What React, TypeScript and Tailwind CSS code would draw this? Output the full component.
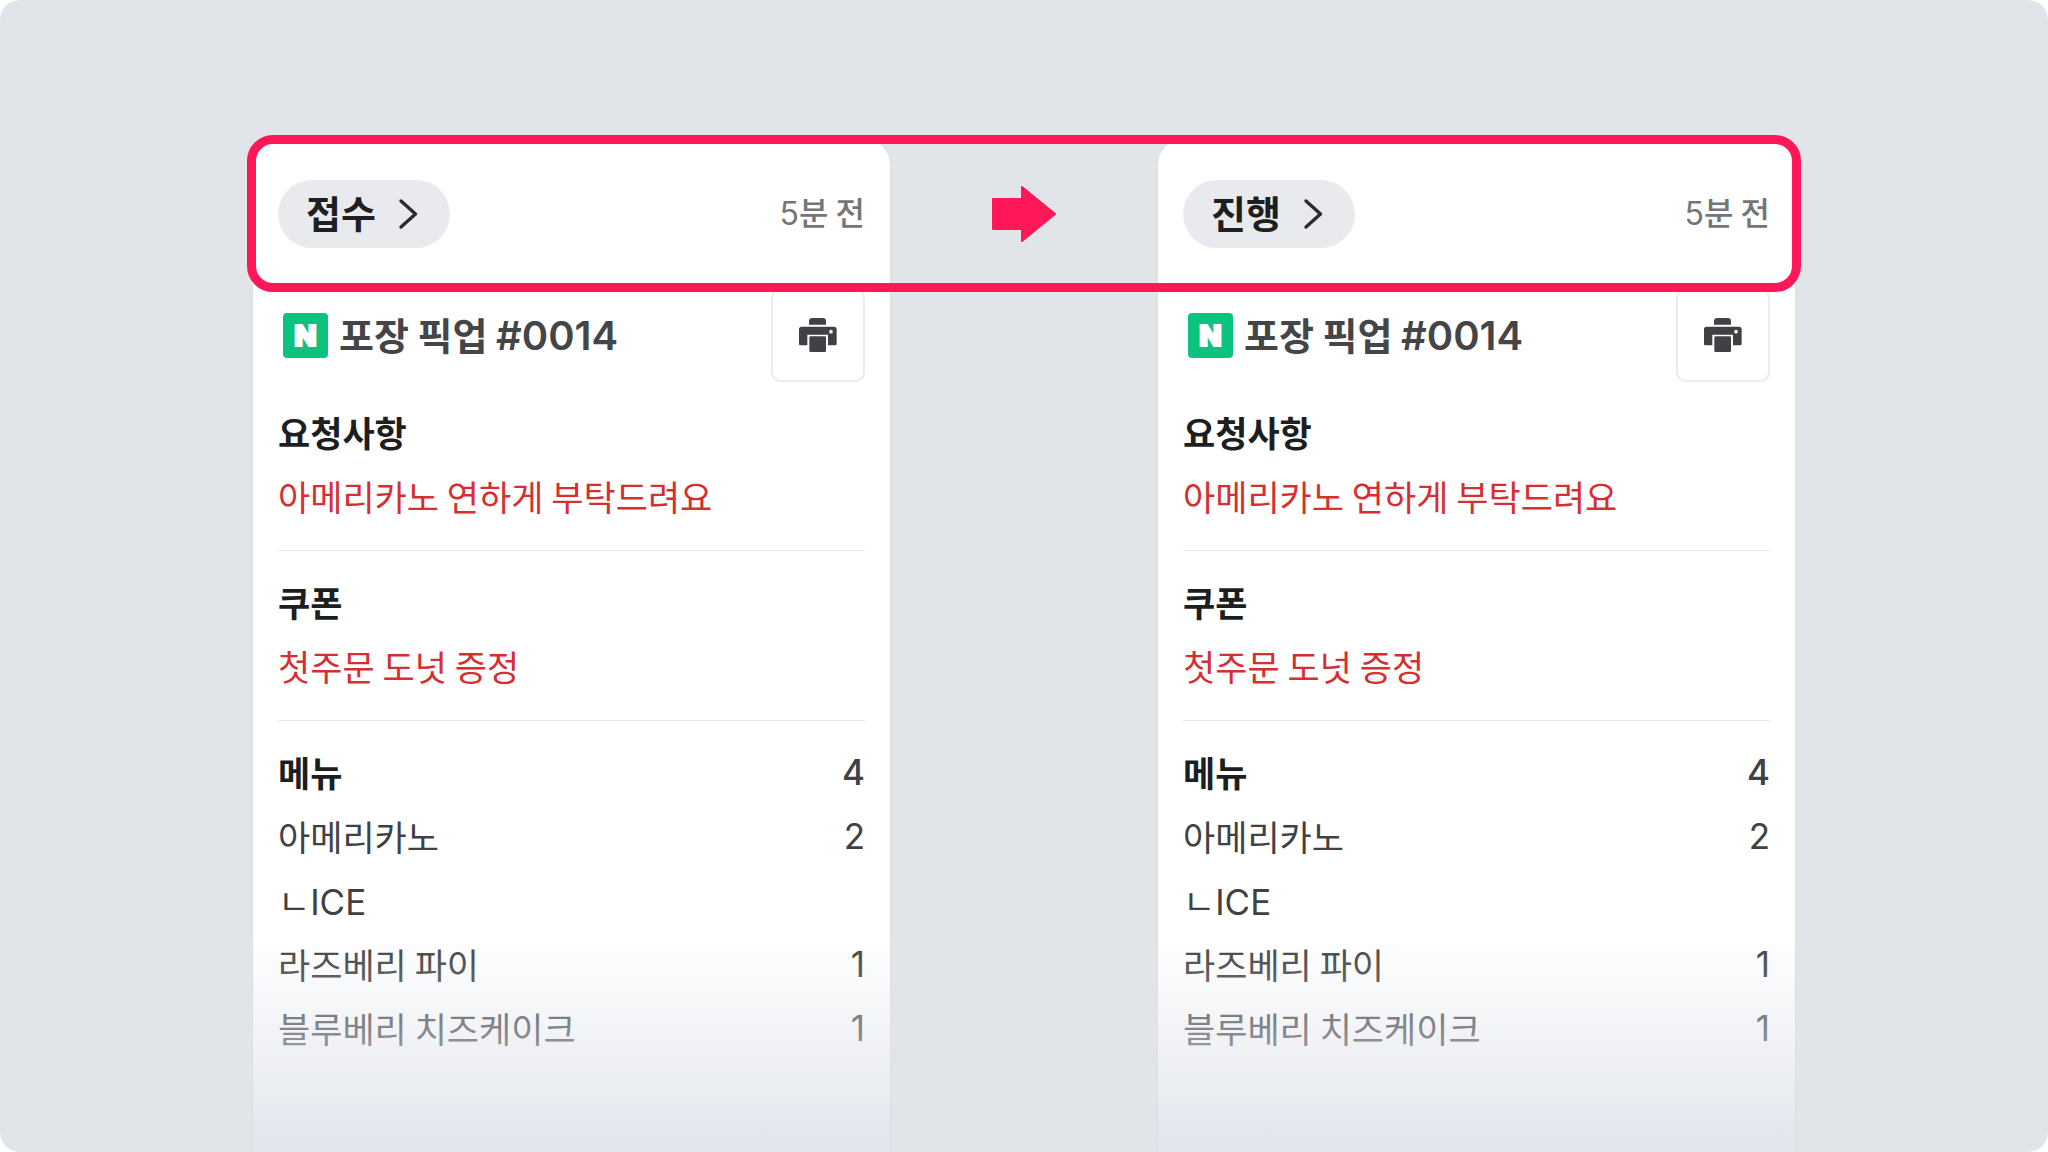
import React from 'react';

interface MenuItem {
  name: string;
  count?: number;
}

interface OrderCardProps {
  status: string;
}

const menuItems: MenuItem[] = [
  { name: '아메리카노', count: 2 },
  { name: 'ㄴICE' },
  { name: '라즈베리 파이', count: 1 },
  { name: '블루베리 치즈케이크', count: 1 }
];

const ChevronIcon: React.FC = () => (
  <svg className="h-8 w-5" viewBox="0 0 20 32" fill="none" aria-hidden="true">
    <path
      d="M3 3 L17.5 16 L3 29"
      stroke="#2b2c2f"
      strokeWidth="3.4"
      strokeLinecap="round"
      strokeLinejoin="round"
    />
  </svg>
);

const PrinterIcon: React.FC = () => (
  <svg className="h-[34px] w-[38px]" viewBox="0 0 114 102" fill="#3f4144" aria-hidden="true">
    <path d="M30 20 V10 Q30 0 40 0 H71 Q81 0 81 10 V20 Z" />
    <path
      fillRule="evenodd"
      d="M8 26 H105 Q113 26 113 34 V78 Q113 82 109 82 H87 V50 H25 V82 H4 Q0 82 0 78 V34 Q0 26 8 26 Z M96 35.5 A5.5 5.5 0 1 0 96 46.5 A5.5 5.5 0 1 0 96 35.5 Z"
    />
    <rect x="31" y="55" width="50" height="47" rx="4" />
  </svg>
);

const ArrowIcon: React.FC = () => (
  <svg className="h-[58px] w-[66px]" viewBox="0 0 66 58" aria-hidden="true">
    <path
      d="M2 14 H31 V2 L64 29 L31 56 V44 H2 Z"
      fill="#ff1757"
      stroke="#ff1757"
      strokeWidth="2"
      strokeLinejoin="round"
    />
  </svg>
);

const OrderCard: React.FC<OrderCardProps> = ({ status }) => {
  return (
    <article className="relative rounded-t-3xl bg-white px-[25px] shadow-[0_0_3px_rgba(0,0,0,0.05)]">
      {/* Status */}
      <header className="flex h-[148px] items-center justify-between">
        <button className="flex h-[68px] items-center gap-[22px] rounded-full bg-[#e9eaed] pr-8 pl-7 text-[38px] font-bold text-[#1e1f21]">
          <span className="pb-1">{status}</span>
          <ChevronIcon />
        </button>
        <p className="pb-1 text-[32px] font-medium text-[#747679]">
          <span className="font-['Inter'] font-normal">5</span>분 전
        </p>
      </header>

      {/* Order title */}
      <div className="flex h-[94px] items-center">
        <span className="ml-[5px] flex size-[45px] items-center justify-center rounded bg-[#0cc27f] font-['Inter'] text-[29px] leading-none font-black text-white [-webkit-text-stroke:2px_white]">
          N
        </span>
        <h2 className="ml-[11px] text-[38px] font-bold text-[#444546]">
          포장 픽업 <span className="font-['Inter'] text-[40px] font-semibold">#0014</span>
        </h2>
        <button
          aria-label="인쇄"
          className="ml-auto flex size-[94px] items-center justify-center rounded-[10px] border-2 border-[#ebebed]"
        >
          <PrinterIcon />
        </button>
      </div>

      {/* Request and coupon */}
      <section className="border-b border-[#e8e9eb] pt-[18px] pb-[22px]">
        <h3 className="font-bold text-[#1d1e1f]">요청사항</h3>
        <p className="text-[#d52f2f]">아메리카노 연하게 부탁드려요</p>
      </section>
      <section className="border-b border-[#e8e9eb] pt-[19px] pb-[22px]">
        <h3 className="font-bold text-[#1d1e1f]">쿠폰</h3>
        <p className="text-[#d52f2f]">첫주문 도넛 증정</p>
      </section>

      {/* Menu list */}
      <section className="pt-[19px] pb-[92px] text-[#404142]">
        <div className="flex h-16 justify-between">
          <h3 className="font-bold text-[#1d1e1f]">메뉴</h3>
          <span className="font-['Inter'] font-medium">4</span>
        </div>
        <ul>
          {menuItems.map((item) => (
            <li key={item.name} className="flex h-16 justify-between">
              <span>
                {item.name === 'ㄴICE' ? (
                  <>
                    ㄴ<span className="font-['Inter']">ICE</span>
                  </>
                ) : (
                  item.name
                )}
              </span>
              <span className="font-['Inter']">{item.count}</span>
            </li>
          ))}
        </ul>
      </section>

      {/* Bottom fade */}
      <div className="pointer-events-none absolute inset-x-0 bottom-0 h-[216px] bg-linear-to-b from-[#e1e5ec]/0 to-[#e1e5ec]"></div>
    </article>
  );
};

const App: React.FC = () => {
  return (
    <div className="bg-white">
      <main className="flex min-h-screen overflow-hidden rounded-[20px] bg-[#e1e5ea] pt-[140px] font-['Noto_Sans_CJK_KR',sans-serif] text-[35px] leading-[64px]">
        <div className="relative mx-auto grid w-full max-w-[1542px] grid-cols-[637fr_268fr_637fr]">
          <OrderCard status="접수" />
          <div className="flex h-[148px] items-center justify-center">
            <ArrowIcon />
          </div>
          <OrderCard status="진행" />

          {/* Highlight around both headers */}
          <div className="pointer-events-none absolute -inset-x-1.5 -top-[5px] h-[157px] rounded-[26px] border-[9px] border-[#ff1757]"></div>
        </div>
      </main>
    </div>
  );
};

export default App;
